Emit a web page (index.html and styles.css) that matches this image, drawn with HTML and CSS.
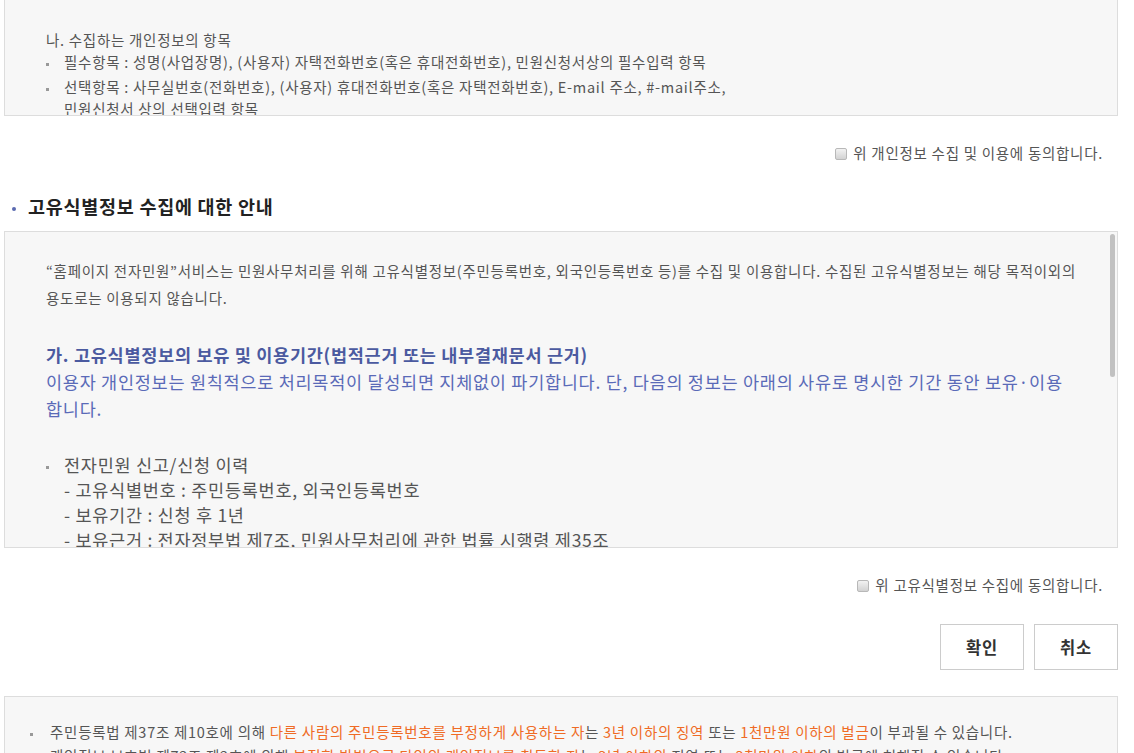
FILE: index.html
```html
<html>

<head>
	<title>전자민원 개인정보 수집 동의</title>
	<link rel="stylesheet" href="styles.css">
</head>

<body>
	<div class="container">

		<!-- 개인정보 수집 항목 (스크롤된 상태) -->
		<div class="terms terms-cut">
			<p class="terms-sub">나. 수집하는 개인정보의 항목</p>
			<ul class="dot-list">
				<li>필수항목 : 성명(사업장명), (사용자) 자택전화번호(혹은 휴대전화번호), 민원신청서상의 필수입력 항목</li>
				<li>선택항목 : 사무실번호(전화번호), (사용자) 휴대전화번호(혹은 자택전화번호), E-mail 주소, #-mail주소,<br>민원신청서 상의 선택입력 항목</li>
			</ul>
		</div>

		<div class="agree">
			<label><input type="checkbox" id="agree1">위 개인정보 수집 및 이용에 동의합니다.</label>
		</div>

		<h2 class="title">고유식별정보 수집에 대한 안내</h2>

		<div class="terms terms-scroll">
			<div class="scroll-body">
				<p>“홈페이지 전자민원”서비스는 민원사무처리를 위해 고유식별정보(주민등록번호, 외국인등록번호 등)를 수집 및 이용합니다. 수집된 고유식별정보는 해당 목적이외의 용도로는 이용되지 않습니다.</p>

				<h3 class="terms-head">가. 고유식별정보의 보유 및 이용기간(법적근거 또는 내부결재문서 근거)</h3>
				<p class="terms-blue">이용자 개인정보는 원칙적으로 처리목적이 달성되면 지체없이 파기합니다. 단, 다음의 정보는 아래의 사유로 명시한 기간 동안 보유·이용합니다.</p>

				<ul class="dot-list big">
					<li>전자민원 신고/신청 이력<br>
						- 고유식별번호 : 주민등록번호, 외국인등록번호<br>
						- 보유기간 : 신청 후 1년<br>
						- 보유근거 : 전자정부법 제7조, 민원사무처리에 관한 법률 시행령 제35조</li>
					<li>민원 처리결과 통보 이력<br>
						- 고유식별번호 : 주민등록번호, 외국인등록번호<br>
						- 보유기간 : 처리 완료 후 1년<br>
						- 보유근거 : 민원 처리에 관한 법률 제27조</li>
				</ul>
			</div>
			<!-- 스크롤바 -->
			<div class="scroll-track"><div class="scroll-thumb"></div></div>
		</div>

		<div class="agree">
			<label><input type="checkbox" id="agree2">위 고유식별정보 수집에 동의합니다.</label>
		</div>

		<div class="buttons">
			<button class="btn" type="button">확인</button>
			<button class="btn" type="button">취소</button>
		</div>

		<div class="terms notice">
			<ul class="dot-list wide">
				<li>주민등록법 제37조 제10호에 의해 <span class="warn">다른 사람의 주민등록번호를 부정하게 사용하는 자</span>는 <span class="warn">3년 이하의 징역</span> 또는 <span class="warn">1천만원 이하의 벌금</span>이 부과될 수 있습니다.</li>
				<li>개인정보 보호법 제72조 제2호에 의해 <span class="warn">부정한 방법으로 타인의 개인정보를 취득한 자</span>는 <span class="warn">3년 이하의</span> 징역 또는 <span class="warn">3천만원 이하</span>의 벌금에 처해질 수 있습니다.</li>
			</ul>
		</div>

	</div>
</body>

</html>
```

FILE: styles.css
```css
body {
	font-family: "Noto Sans CJK KR", "Noto Sans", sans-serif;
	font-size: 14.5px;
	letter-spacing: 0.05em;
	color: #555;
	background-color: #fff;
	margin: 0;
	padding: 0;
	overflow: hidden;
}

.container {
	padding: 0 16px 0 4px;
}

p {
	margin: 0;
}

/* 약관 박스 */
.terms {
	background-color: #f7f7f7;
	border: 1px solid #ddd;
	box-sizing: border-box;
	padding: 0 41px;
}

.terms-cut {
	height: 116px;
	border-top: 0;
	padding-top: 29px;
	overflow: hidden;
}

.terms-sub {
	line-height: 22px;
}

.dot-list {
	list-style: none;
	margin: 0;
	padding: 0;
}

.dot-list li {
	line-height: 22px;
	margin-top: 3px;
	padding-left: 18px;
	text-indent: -18px;
}

.dot-list li:first-child {
	margin-top: 0;
}

.dot-list li::before {
	content: "";
	display: inline-block;
	width: 3px;
	height: 3px;
	background-color: #999;
	margin-right: 15px;
	vertical-align: middle;
}

/* 동의 체크 */
.agree {
	margin-top: 27px;
	padding-right: 15px;
	text-align: right;
	line-height: 20px;
}

.agree input {
	appearance: none;
	-webkit-appearance: none;
	width: 12px;
	height: 12px;
	border: 1px solid #b8b8b8;
	border-radius: 2px;
	background: linear-gradient(#f2f2f2, #d2d2d2);
	margin: 0 6px 0 0;
	vertical-align: -1px;
}

.title {
	margin: 31px 0 13px;
	font-size: 18.5px;
	line-height: 24px;
	color: #222;
}

.title::before {
	content: "";
	display: inline-block;
	width: 4px;
	height: 4px;
	border-radius: 50%;
	background-color: #5a6ab0;
	margin: 0 12px 0 8px;
	vertical-align: middle;
}

.terms-scroll {
	height: 317px;
	padding: 0;
	display: flex;
	overflow: hidden;
}

.scroll-body {
	flex: 1;
	padding: 25px 31px 25px 41px;
}

.scroll-body p {
	line-height: 27px;
}

.scroll-track {
	width: 5px;
	padding: 2px;
	flex-shrink: 0;
}

.scroll-thumb {
	height: 143px;
	background-color: #c1c1c1;
	border-radius: 3px;
}

.terms-head {
	margin: 30px 0 0;
	font-size: 17.5px;
	line-height: 27px;
	color: #4b5aa0;
}

.scroll-body .terms-blue {
	font-size: 17.5px;
	color: #5a6ab8;
}

.dot-list.big {
	margin-top: 30px;
	font-size: 17.5px;
}

.dot-list.big li {
	line-height: 25px;
	margin-top: 25px;
}

.dot-list.big li:first-child {
	margin-top: 0;
}

/* 버튼 */
.buttons {
	margin-top: 29px;
	display: flex;
	justify-content: flex-end;
	gap: 10px;
}

.btn {
	width: 84px;
	height: 46px;
	border: 1px solid #ccc;
	background-color: #fff;
	font-family: inherit;
	font-size: 16.5px;
	font-weight: bold;
	letter-spacing: 0.05em;
	color: #333;
	cursor: pointer;
}

/* 하단 안내 */
.notice {
	margin-top: 26px;
	padding: 23px 20px 30px 25px;
}

.dot-list.wide li {
	line-height: 24px;
	margin-top: 0;
	padding-left: 20px;
	text-indent: -20px;
}

.dot-list.wide li::before {
	margin-right: 17px;
}

.warn {
	color: #ef6b25;
}
```
